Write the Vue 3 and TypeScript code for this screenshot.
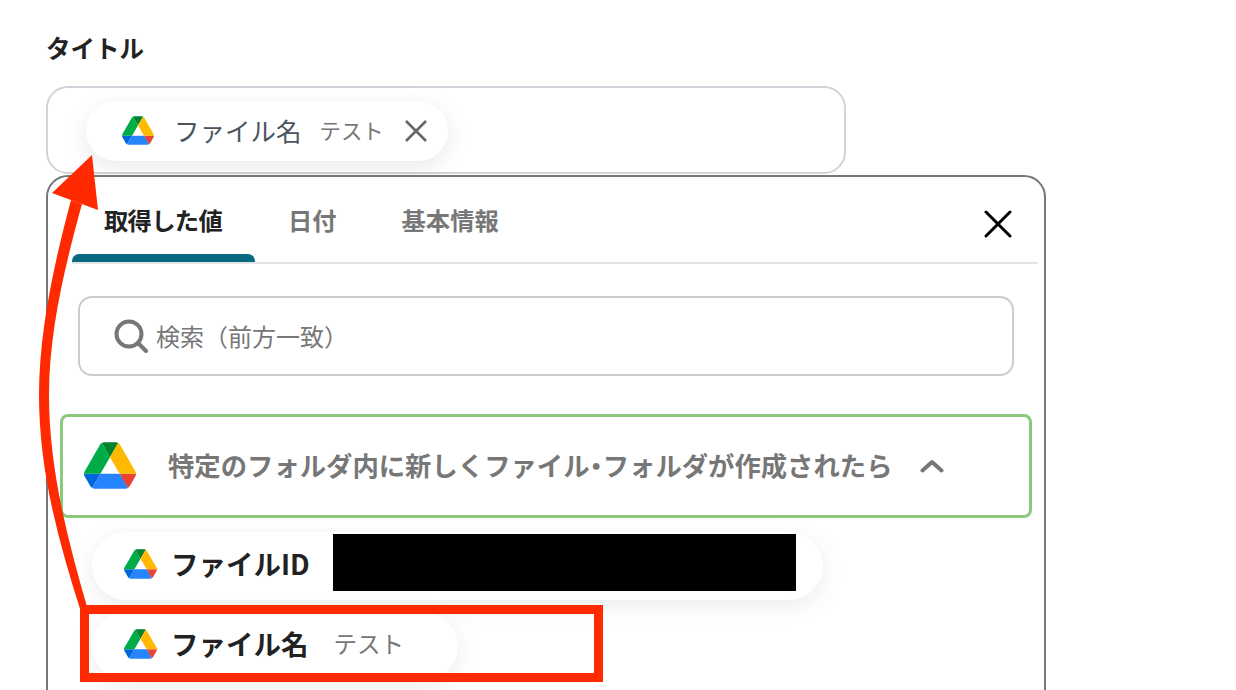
<template>
  <div class="page">
    <div class="title">タイトル</div>

    <div class="field">
      <div class="chip">
        <svg class="logo" viewBox="0 0 87.3 78"><path v-for="p in driveParts" :key="p.fill" :d="p.d" :fill="p.fill" /></svg>
        <span class="chip-name">ファイル名</span>
        <span class="chip-value">テスト</span>
        <svg class="chip-x" viewBox="0 0 24 24"><path d="M2 2 22 22M22 2 2 22" /></svg>
      </div>
    </div>

    <div class="panel">
      <div class="tabs">
        <div v-for="(tab, i) in tabs" :key="tab" class="tab" :class="{ active: i === 0 }">
          <span class="tab-label">{{ tab }}</span>
          <span class="tab-bar"></span>
        </div>
        <svg class="close" viewBox="0 0 28 28"><path d="M2 2 26 26M26 2 2 26" /></svg>
      </div>

      <div class="search">
        <svg class="search-icon" viewBox="0 0 34 34"><circle cx="15" cy="15" r="12.5" /><path d="M24 24 32 32" /></svg>
        <span class="search-text">検索（前方一致）</span>
      </div>

      <div class="group">
        <svg class="group-logo" viewBox="0 0 87.3 78"><path v-for="p in driveParts" :key="p.fill" :d="p.d" :fill="p.fill" /></svg>
        <span class="group-text">特定のフォルダ内に新しくファイル<span class="dot">・</span>フォルダが作成されたら</span>
        <svg class="chevron" viewBox="0 0 24 14"><path d="M2.500 11.500 12 3l9.500 8.500" /></svg>
      </div>

      <div class="item item-id">
        <svg class="item-logo" viewBox="0 0 87.3 78"><path v-for="p in driveParts" :key="p.fill" :d="p.d" :fill="p.fill" /></svg>
        <span class="item-name">ファイルID</span>
        <span class="masked"></span>
      </div>
      <div class="item item-file">
        <svg class="item-logo" viewBox="0 0 87.3 78"><path v-for="p in driveParts" :key="p.fill" :d="p.d" :fill="p.fill" /></svg>
        <span class="item-name">ファイル名</span>
        <span class="item-value">テスト</span>
      </div>
    </div>

    <!-- annotation drawn over the screenshot -->
    <div class="mark"></div>
    <svg class="arrow" viewBox="0 0 1236 690">
      <path d="M71 200C55 260 39 330 39 395C39 470 58 540 81 612L88 610C66 535 49 465 49 395C49 330 66 262 82 204Z" />
      <path d="M92 155 52 193 98 210Z" />
    </svg>
  </div>
</template>

<script setup lang="ts">
const tabs: string[] = ['取得した値', '日付', '基本情報']

const driveParts = [
  { fill: '#0066da', d: 'm6.6 66.85 3.85 6.65c.8 1.4 1.95 2.5 3.3 3.3l13.75-23.8h-27.5c0 1.55.4 3.1 1.2 4.5z' },
  { fill: '#00ac47', d: 'm43.65 25-13.75-23.8c-1.35.8-2.5 1.9-3.3 3.3l-25.4 44a9.06 9.06 0 0 0 -1.2 4.5h27.5z' },
  { fill: '#ea4335', d: 'm73.55 76.8c1.35-.8 2.5-1.9 3.3-3.3l1.6-2.75 7.65-13.25c.8-1.4 1.2-2.95 1.2-4.5h-27.502l5.852 11.5z' },
  { fill: '#00832d', d: 'm43.65 25 13.75-23.8c-1.35-.8-2.9-1.2-4.5-1.2h-18.5c-1.6 0-3.15.45-4.5 1.2z' },
  { fill: '#2684fc', d: 'm59.8 53h-32.3l-13.75 23.8c1.35.8 2.9 1.2 4.5 1.2h50.8c1.6 0 3.15-.45 4.5-1.2z' },
  { fill: '#ffba00', d: 'm73.4 26.5-12.7-22c-.8-1.4-1.95-2.5-3.3-3.3l-13.75 23.8 16.15 28h27.45c0-1.55-.4-3.1-1.2-4.5z' }
]
</script>

<style>
html,
body {
  overflow: hidden;
  background: #fff;
}
</style>

<style scoped>
.page {
  position: relative;
  height: 690px;
  overflow: hidden;
  box-sizing: border-box;
  padding: 31px 0 0 46px;
  font-family: "Noto Sans CJK JP", "Noto Sans", sans-serif;
  color: #222;
}

.title {
  font-size: 24.5px;
  font-weight: 700;
  line-height: 34px;
  margin-bottom: 21px;
}

.field {
  width: 800px;
  height: 88px;
  box-sizing: border-box;
  border: 2px solid #d0d4da;
  border-radius: 22px;
  padding: 13px 0 0 38px;
}

.chip {
  display: flex;
  align-items: center;
  width: 362px;
  height: 60px;
  box-sizing: border-box;
  padding-left: 36px;
  border-radius: 30px;
  background: #fff;
  box-shadow: 0 6px 24px rgba(0, 0, 0, 0.09);
  color: #4a5560;
}

.logo {
  width: 32px;
  height: 29px;
  margin-bottom: 2px;
}

.chip-name {
  margin: 0 0 4px 20px;
  font-size: 25.5px;
  white-space: nowrap;
}

.chip-value {
  margin: 0 0 4px 18px;
  font-size: 21.4px;
  color: #777;
  white-space: nowrap;
}

.chip-x {
  width: 24px;
  height: 24px;
  margin-left: 20px;
  fill: none;
  stroke: #666;
  stroke-width: 2.6;
}

.panel {
  width: 1000px;
  height: 560px;
  margin-top: 1px;
  box-sizing: border-box;
  border: 2px solid #777;
  border-radius: 22px;
  background: #fff;
}

.tabs {
  display: flex;
  height: 87px;
  box-sizing: border-box;
  margin: 0 6px 0 24px;
  border-bottom: 2px solid #e4e4e4;
  gap: 1px;
}

.tab {
  display: flex;
  flex-direction: column;
  padding: 0 32px;
  color: #777;
  font-size: 24.3px;
  font-weight: 700;
}

.tab-label {
  flex: 1;
  display: flex;
  align-items: center;
  padding-top: 8px;
  white-space: nowrap;
}

.tab-bar {
  height: 8px;
  margin: 0 -32px;
  border-radius: 7px 7px 0 0;
}

.tab.active {
  color: #222;
  letter-spacing: -0.7px;
  padding-right: 33px;
}

.tab.active .tab-bar {
  background: #086a82;
  margin-right: -33px;
}

.close {
  width: 28px;
  height: 28px;
  margin: 33px 26px 0 auto;
  fill: none;
  stroke: #000;
  stroke-width: 3;
  stroke-linecap: round;
}

.search {
  display: flex;
  align-items: center;
  width: 936px;
  height: 80px;
  box-sizing: border-box;
  margin: 32px 0 0 30px;
  padding-left: 34px;
  border: 2px solid #ccc;
  border-radius: 14px;
  color: #777;
}

.search-text {
  font-size: 24px;
  margin-bottom: 1px;
  margin-left: -2px;
  white-space: nowrap;
}

.search-icon {
  width: 34px;
  height: 34px;
  margin-right: 10px;
  fill: none;
  stroke: #777;
  stroke-width: 4;
  stroke-linecap: round;
}

.group {
  display: flex;
  align-items: center;
  width: 972px;
  height: 104px;
  box-sizing: border-box;
  margin: 38px 0 0 12px;
  padding-left: 21px;
  border: 3px solid #8cc97f;
  border-radius: 8px;
  color: #777;
}

.group-logo {
  width: 52px;
  height: 47px;
  margin-bottom: 2px;
}

.group-text {
  margin: 0 0 4px 32px;
  font-size: 26.35px;
  font-weight: 700;
  white-space: nowrap;
}

/* proportional glyph so the dot sits tight between the words */
.dot {
  font-feature-settings: "palt";
}

.chevron {
  width: 24px;
  height: 14px;
  margin-left: 28px;
  fill: none;
  stroke: #777;
  stroke-width: 4;
  stroke-linecap: round;
  stroke-linejoin: round;
}

.item {
  display: flex;
  align-items: center;
  height: 68px;
  box-sizing: border-box;
  margin-left: 44px;
  padding-left: 32px;
  border-radius: 34px;
  background: #fff;
  box-shadow: 0 6px 24px rgba(0, 0, 0, 0.08);
}

.item-id {
  width: 731px;
  margin-top: 14px;
}

.item-file {
  width: 366px;
  margin-top: 12px;
}

.item-logo {
  width: 33px;
  height: 30px;
  margin-bottom: 4px;
}

.item-name {
  margin: 0 0 6px 14px;
  font-size: 27.5px;
  font-weight: 700;
  white-space: nowrap;
}

.item-value {
  margin: 0 0 6px 25px;
  font-size: 23.5px;
  color: #777;
  white-space: nowrap;
}

.masked {
  align-self: flex-start;
  width: 463px;
  height: 57px;
  margin: 2px 0 0 23px;
  background: #000;
}

.mark {
  position: absolute;
  left: 80px;
  top: 605px;
  width: 523px;
  height: 77px;
  box-sizing: border-box;
  border: 9px solid #ff2a00;
}

.arrow {
  position: absolute;
  left: 0;
  top: 0;
  width: 1236px;
  height: 690px;
  fill: #ff2a00;
  pointer-events: none;
}
</style>
